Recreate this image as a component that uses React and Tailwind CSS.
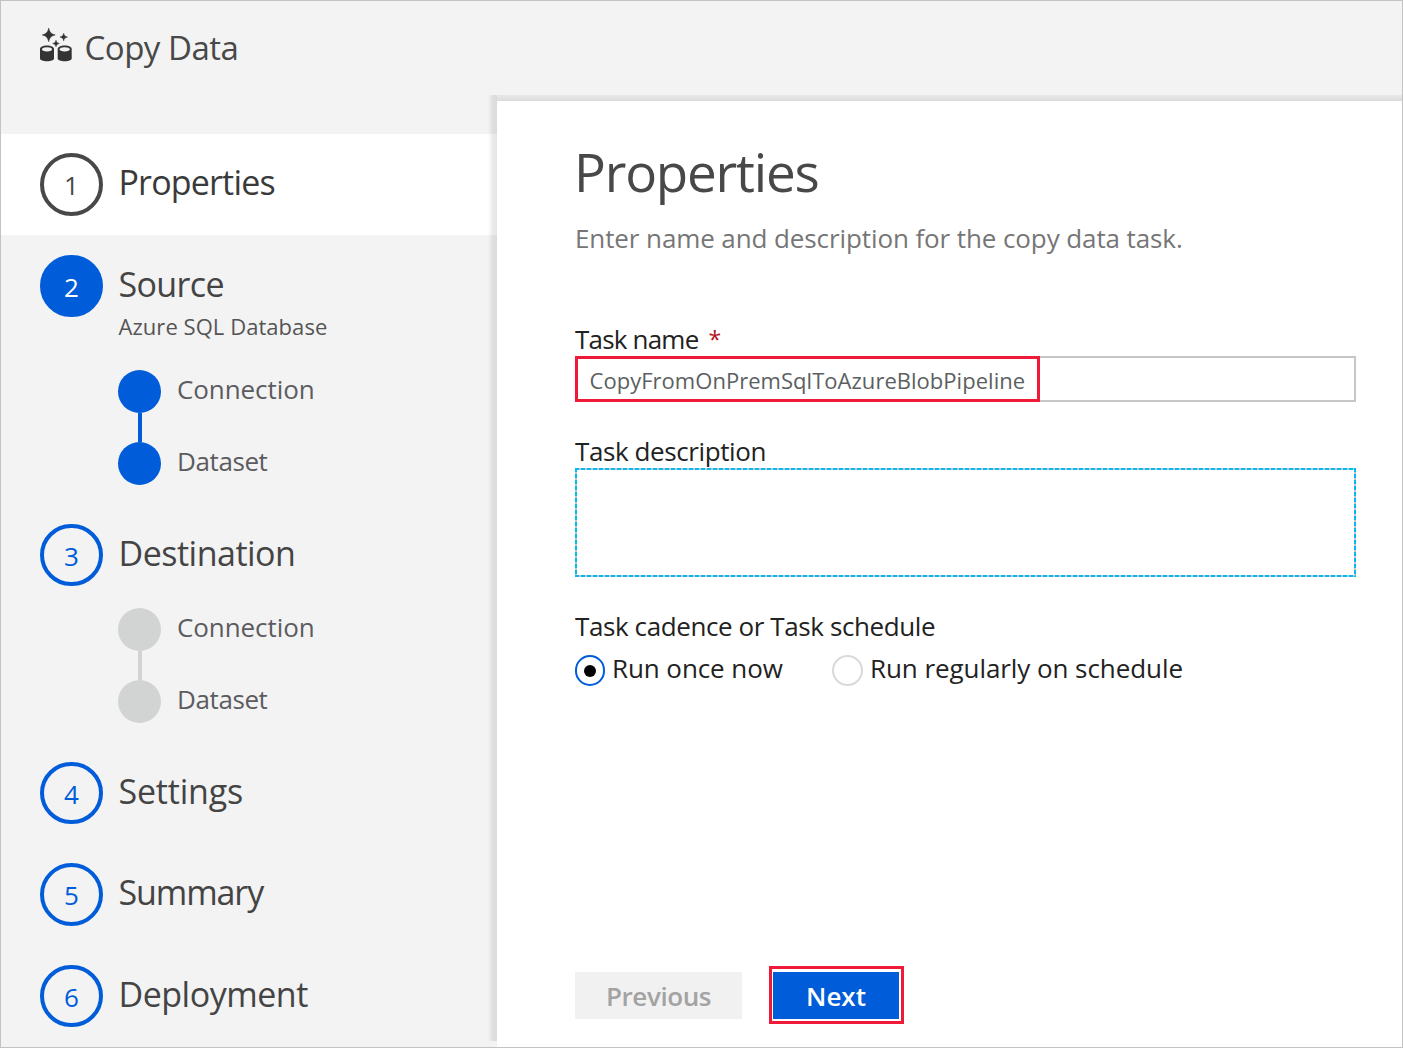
import React from 'react';

const steps = [
  { n: 1, title: 'Properties', tracking: 'tracking-[-0.83px]', state: 'current' },
  {
    n: 2,
    title: 'Source',
    tracking: 'tracking-[-0.64px]',
    subtitle: 'Azure SQL Database',
    state: 'done',
    height: 'h-[269px]',
    subs: 'done',
    subsMargin: 'mt-[29px]',
  },
  {
    n: 3,
    title: 'Destination',
    tracking: 'tracking-[-0.5px]',
    state: 'todo',
    height: 'h-[238px]',
    subs: 'todo',
    subsMargin: 'mt-[22px]',
  },
  { n: 4, title: 'Settings', tracking: 'tracking-[-0.2px]', state: 'todo', height: 'h-[101px]' },
  { n: 5, title: 'Summary', tracking: 'tracking-[-1.1px]', state: 'tall', height: 'h-[102px]' },
  { n: 6, title: 'Deployment', tracking: 'tracking-[-0.48px]', state: 'todo', height: 'h-[101px]' },
];

const circleStyles = {
  current: 'h-[63px] border-[#484848] text-[#484848]',
  done: 'h-[62px] border-[#015cda] bg-[#015cda] text-white',
  todo: 'h-[62px] border-[#015cda] text-[#015cda]',
  tall: 'h-[63px] border-[#015cda] text-[#015cda]',
};

function CopyDataIcon() {
  return (
    <svg className="mt-px h-[34px] w-8 shrink-0" viewBox="0 0 32 34" fill="#333">
      <path d="M8.700 0c.9 4 2.300 5.900 6.500 6.900-4.200 1-5.600 2.900-6.500 6.900-.9-4-2.300-5.900-6.500-6.900C6.400 5.900 7.800 4 8.700 0z" stroke="#333" strokeWidth=".5" />
      <path d="M23.700 5.300c.5 2.300 1.400 3.300 3.800 3.800-2.400.5-3.300 1.500-3.800 3.800-.5-2.300-1.400-3.300-3.800-3.800 2.400-.5 3.300-1.500 3.800-3.800z" stroke="#333" strokeWidth=".5" />
      <path d="M16 12.200c.5 2 1.300 2.900 3.300 3.300-2 .4-2.800 1.300-3.300 3.300-.5-2-1.300-2.900-3.300-3.300 2-.4 2.800-1.300 3.300-3.300z" stroke="#333" strokeWidth=".5" />
      <path d="M0 21c0-2.200 3.100-3.600 7-3.600s7 1.400 7 3.600v9.500c0 1.700-3.100 2.700-7 2.700s-7-1-7-2.700z" />
      <path d="M17.700 21c0-2.200 3.100-3.600 7-3.600s7 1.400 7 3.600v9.500c0 1.700-3.100 2.700-7 2.700s-7-1-7-2.700z" />
      <ellipse cx="7" cy="21.300" rx="5" ry="2.100" fill="#f3f3f3" />
      <ellipse cx="24.700" cy="21.300" rx="5" ry="2.100" fill="#f3f3f3" />
    </svg>
  );
}

function SubSteps({ state, margin }) {
  const color = state === 'done' ? 'bg-[#015cda]' : 'bg-[#d2d4d3]';
  return (
    <div className={`ml-[78px] flex flex-col ${margin}`}>
      <div className="flex h-[43px] items-start gap-4">
        <span className={`size-[43px] rounded-full ${color}`} />
        <span className="mt-px text-[26px] leading-9 tracking-[-0.08px] text-[#5c5c60]">Connection</span>
      </div>
      <span className={`ml-5 h-[29px] w-1 ${color}`} />
      <div className="flex h-[43px] items-start gap-4">
        <span className={`size-[43px] rounded-full ${color}`} />
        <span className="mt-px text-[26px] leading-9 tracking-[-0.4px] text-[#5c5c60]">Dataset</span>
      </div>
    </div>
  );
}

function Step({ step }) {
  const box = step.state === 'current' ? 'h-[101px] bg-white pt-[19px]' : `pt-5 ${step.height}`;
  return (
    <li className={`shrink-0 pl-[39px] ${box}`}>
      <div className="flex items-start gap-[15.5px]">
        <span
          className={`flex w-[63px] shrink-0 items-start justify-center rounded-full border-4 pt-2.5 text-[26px] leading-9 ${circleStyles[step.state]}`}
        >
          {step.n}
        </span>
        <div className="mt-[9px] flex flex-col">
          <span
            className={`text-[34px] leading-10 ${step.tracking} ${step.state === 'current' ? 'text-[#3a3a3a]' : 'text-[#444]'}`}
          >
            {step.title}
          </span>
          {step.subtitle && (
            <span className="mt-[7px] text-[22px] leading-[30px] tracking-[0.05px] text-[#555]">{step.subtitle}</span>
          )}
        </div>
      </div>
      {step.subs && <SubSteps state={step.subs} margin={step.subsMargin} />}
    </li>
  );
}

export default function App() {
  return (
    <div className="flex h-[1048px] w-[1403px] flex-col overflow-hidden border border-[#c3c3c3] bg-[#f3f3f3] font-['Open_Sans','Noto_Sans',sans-serif] whitespace-nowrap">
      <header className="flex h-[94px] shrink-0 items-start gap-[12.5px] pt-[26px] pl-[39px]">
        <CopyDataIcon />
        <h1 className="mt-px text-[33px] leading-10 tracking-[-0.5px] text-[#484848]">Copy Data</h1>
      </header>

      <div className="flex min-h-0 flex-1">
        <nav className="w-[487px] shrink-0 pt-[39px]">
          <ol className="flex flex-col">
            {steps.map((s) => (
              <Step key={s.n} step={s} />
            ))}
          </ol>
        </nav>

        <div className="flex w-[9px] shrink-0 flex-col">
          <div className="h-[39px]" />
          <div className="h-[101px] bg-white" />
        </div>
        <div className="relative flex min-w-0 flex-1 flex-col">
          <div className="absolute top-0 bottom-1.5 -left-[9px] w-[9px] bg-linear-to-r from-transparent via-black/8 to-black/10" />
          <div className="h-1.5 shrink-0 bg-linear-to-b from-[#e8e8e8] to-[#dcdcdc]" />
          <main className="flex flex-1 flex-col bg-white pr-[46px] pb-[23px] pl-[78px] text-[26px] leading-[35px] text-[#222]">
            <h2 className="mt-9 -ml-px text-[53px] leading-[70px] tracking-[-1.2px] text-[#484848]">Properties</h2>
            <p className="mt-[13px] leading-9 tracking-[-0.1px] text-[#767676]">
              Enter name and description for the copy data task.
            </p>

            <label className="mt-[65px] -mb-px flex pt-px">
              <span className="tracking-[-0.8px]">Task name</span>
              <span className="ml-2.5 text-[23px] text-[#b5121b]">*</span>
            </label>
            <div className="flex h-[46px] bg-white shadow-[inset_0_0_0_2px_#c6c6c6]">
              <div className="h-full w-[465px] border-[3px] border-[#ef1a3a] pt-1 pl-[11.5px] text-[22px] leading-[34px] tracking-[0.03px] text-[#5c5f61]">
                CopyFromOnPremSqlToAzureBlobPipeline
              </div>
            </div>

            <label className="mt-[31px] -mb-px pt-px tracking-[-0.4px]">Task description</label>
            <div className="relative h-[109px] border-2 border-[#c6c6c6]">
              <svg className="absolute -top-0.5 -left-0.5" width="781" height="109" fill="none" stroke="#00bcf2" strokeWidth="2" strokeDasharray="4 2">
                <path d="M0 1H781M0 108H781M1 0V109M780 0V109" />
              </svg>
            </div>

            <div className="mt-[31px] -mb-px pt-px tracking-[-0.4px]">Task cadence or Task schedule</div>
            <div className="mt-2 flex items-start">
              <span className="mt-1 flex h-[31px] w-[30px] items-center justify-center rounded-full border-2 border-[#015cda]">
                <span className="size-3 rounded-full bg-black" />
              </span>
              <span className="ml-[7px] w-[220px] tracking-[-0.09px]">Run once now</span>
              <span className="mt-1 h-[31px] w-[31px] rounded-full border-2 border-[#d9d9d9]" />
              <span className="ml-[7px] tracking-[-0.07px]">Run regularly on schedule</span>
            </div>

            <div className="mt-auto flex items-start font-semibold">
              <button className="mt-1.5 h-[47px] w-[167px] bg-[#f1f1f1] pt-0.5 tracking-[-0.39px] text-[#a3a3a3]">Previous</button>
              <div className="ml-[27px] h-[58px] w-[135px] border-[3px] border-[#ef1a3a] pt-[3px] pl-px">
                <button className="h-[47px] w-[126px] bg-[#015cda] pt-0.5 text-white">Next</button>
              </div>
            </div>
          </main>
        </div>
      </div>
    </div>
  );
}
